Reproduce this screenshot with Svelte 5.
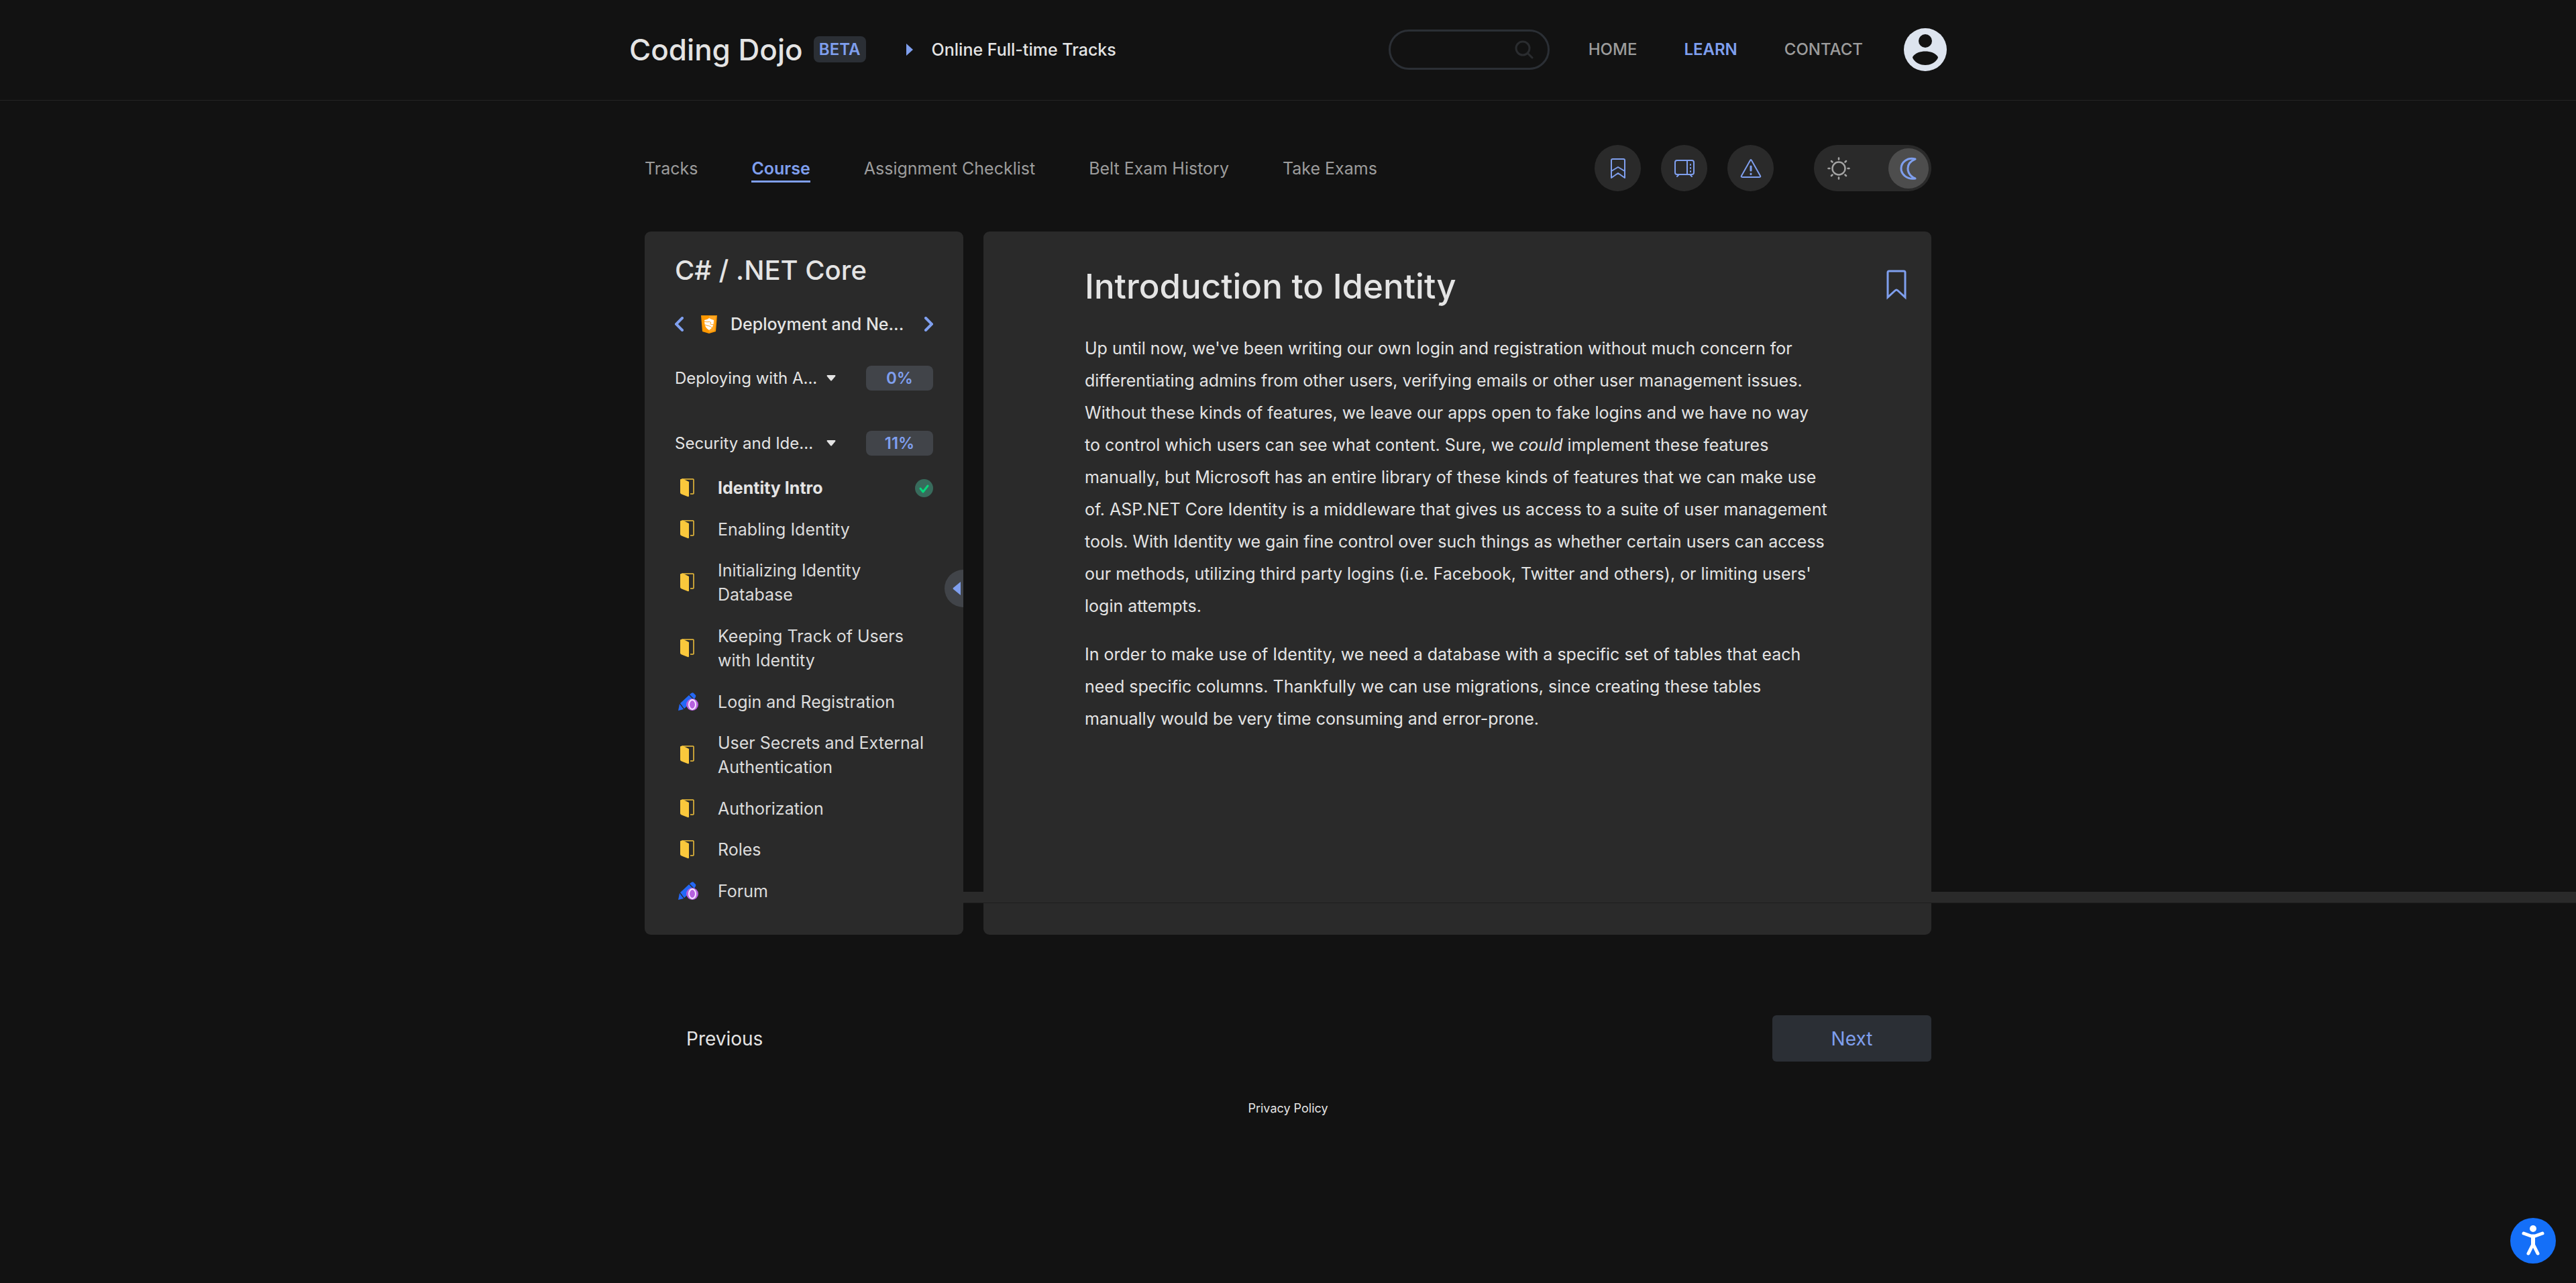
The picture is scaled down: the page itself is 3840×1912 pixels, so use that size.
<script>
  const tabs = ['Tracks', 'Course', 'Assignment Checklist', 'Belt Exam History', 'Take Exams'];
  const chapters = [
    { name: 'Deploying with A...', progress: '0%' },
    { name: 'Security and Ide...', progress: '11%' },
  ];
  const lessons = [
    { title: 'Identity Intro', kind: 'book', done: true },
    { title: 'Enabling Identity', kind: 'book' },
    { title: 'Initializing Identity Database', kind: 'book' },
    { title: 'Keeping Track of Users with Identity', kind: 'book' },
    { title: 'Login and Registration', kind: 'task' },
    { title: 'User Secrets and External Authentication', kind: 'book' },
    { title: 'Authorization', kind: 'book' },
    { title: 'Roles', kind: 'book' },
    { title: 'Forum', kind: 'task' },
  ];
  const firstParagraph = [
    "Up until now, we've been writing our own login and registration without much concern for",
    'differentiating admins from other users, verifying emails or other user management issues.',
    'Without these kinds of features, we leave our apps open to fake logins and we have no way',
    ['to control which users can see what content. Sure, we ', 'could', ' implement these features'],
    'manually, but Microsoft has an entire library of these kinds of features that we can make use',
    'of. ASP.NET Core Identity is a middleware that gives us access to a suite of user management',
    'tools. With Identity we gain fine control over such things as whether certain users can access',
    "our methods, utilizing third party logins (i.e. Facebook, Twitter and others), or limiting users'",
    'login attempts.',
  ];
  const secondParagraph = [
    'In order to make use of Identity, we need a database with a specific set of tables that each',
    'need specific columns. Thankfully we can use migrations, since creating these tables',
    'manually would be very time consuming and error-prone.',
  ];
</script>

<div class="page">
  <header>
    <div class="bar">
      <a class="brand" href="#home">Coding Dojo</a>
      <span class="beta">BETA</span>
      <svg class="crumb" viewBox="0 0 10 18"><path d="M0 0 10 9 0 18Z" fill="#7f9fee" /></svg>
      <a class="track" href="#track">Online Full-time Tracks</a>
      <div class="search">
        <input type="text" aria-label="Search" />
        <svg viewBox="0 0 28 28"><g fill="none" stroke="#2a2c2f" stroke-width="3" stroke-linecap="round"><circle cx="12" cy="12" r="10" /><path d="M19.500 19.500 26 26" /></g></svg>
      </div>
      <nav class="main-nav">
        <a href="#home">HOME</a>
        <a href="#learn" class="on">LEARN</a>
        <a href="#contact">CONTACT</a>
      </nav>
      <button class="avatar" aria-label="Account">
        <svg viewBox="0 0 64 64"><circle cx="32" cy="32" r="32" fill="#dde4ef" /><circle cx="32" cy="19" r="10" fill="#121212" /><path d="M13 43C17 36.500 25 34.500 32 34.500s15 2 19 8.500q0 1-1 3C46 52 39 55 32 55S18 52 14 46q-1-2-1-3Z" fill="#121212" /></svg>
      </button>
    </div>
  </header>

  <main>
    <div class="tools">
      <nav class="tabs">
        {#each tabs as tab}
          <a href="#{tab}" class:on={tab === 'Course'}>{tab}</a>
        {/each}
      </nav>
      <div class="actions">
        <button class="round" aria-label="Bookmarks">
          <svg viewBox="0 0 32 32"><g class="line"><path d="M6 4q0-2 2-2h16q2 0 2 2v26l-10-7-10 7Z" /><path d="M6 20l10-6 10 6" /></g></svg>
        </button>
        <button class="round" aria-label="Lectures">
          <svg viewBox="0 0 32 32"><g class="line"><rect x="2" y="4" width="28" height="21" rx="3" /><path d="M20 4v21M7 26l-2 2M25 26l2 2M25 10v1M25 15v1M25 20v1" /></g></svg>
        </button>
        <button class="round" aria-label="Report an issue">
          <svg viewBox="0 0 32 32"><g class="line"><path d="M15 4q1-2 2 0L30 27q1 2-2 2H4q-3 0-2-2Z" /><path d="M16 13v6M16 24v.500" stroke-width="3" /></g></svg>
        </button>
        <button class="theme" aria-label="Toggle dark mode">
          <svg class="sun" viewBox="0 0 34 34"><g fill="none" stroke="#a3a3a3" stroke-width="2.500" stroke-linecap="round"><circle cx="17" cy="17" r="9.500" /><path d="M17 1.500v2M17 30.500v2M1.500 17h2M30.500 17h2M6 6l1.500 1.500M26.500 26.500 28 28M6 28l1.500-1.500M26.500 7.500 28 6" /></g></svg>
          <span class="knob"><svg viewBox="0 0 32 36"><path d="M26 4C14 1 5 9 5 18s9 17 21 15C19 30 15 25 15 18S19 7 26 4Z" fill="none" stroke="#7f9fee" stroke-width="3" stroke-linejoin="round" /></svg></span>
        </button>
      </div>
    </div>

    <div class="columns">
      <aside>
        <h2>C# / .NET Core</h2>
        <div class="module">
          <button aria-label="Previous module"><svg class="chev" viewBox="0 0 14 22"><path d="M11 2 2 11l9 9" /></svg></button>
          <svg class="shield" viewBox="0 0 24 27"><path d="M0 0h24l-2 24-10 3-10-3Z" fill="#ff9800" /><path d="M12 1h10l-2 22-8 2Z" fill="#ffa726" /><path d="M12 4c3 2 5 2 7 3 0 8-2 12-7 15C7 19 5 15 5 7c3-1 5-1 7-3Z" fill="#fff" /><path d="M5 9c5 2 8-1 10 2-3 3 0 2 4 3M6 14c4 2 7 1 10 4" fill="none" stroke="#ff9f15" stroke-width="1" /></svg>
          <span>Deployment and Ne...</span>
          <button aria-label="Next module"><svg class="chev" viewBox="0 0 14 22"><path d="M3 2l9 9-9 9" /></svg></button>
        </div>
        {#each chapters as chapter}
          <div class="chapter">
            <button class="fold"><span>{chapter.name}</span><svg viewBox="0 0 14 9"><path d="M1 0h12q1 1 0 2L8 8q-1 1-2 0L1 2Q0 1 1 0Z" fill="#e4e4e4" /></svg></button>
            <span class="percent">{chapter.progress}</span>
          </div>
        {/each}
        <ul>
          {#each lessons as lesson}
            <li class:current={lesson.done}>
              {#if lesson.kind === 'book'}
                <svg class="icon" viewBox="0 0 30 28"><path d="M5 1h17q1 0 1 1v20q0 1-1 1h-4" fill="none" stroke="#f5c33b" stroke-width="1.500" /><path d="M3 2q0-1 1-1h4l8 4v21q0 2-2 1L4 23q-1-1-1-2Z" fill="#fac83c" /></svg>
              {:else}
                <svg class="icon" viewBox="0 0 30 28"><path d="M0 27 2 17l6 8ZM3 16 16 4l7 7-14 13ZM17 3q4-4 6-2l3 3q1 2-2 6Z" fill="#2468f6" /><circle cx="21" cy="18" r="9" fill="#b660de" /><ellipse cx="21" cy="18" rx="5" ry="7" fill="none" stroke="#f6e6ff" stroke-width="2" /></svg>
              {/if}
              <a href="#{lesson.title}">{lesson.title}</a>
              {#if lesson.done}
                <svg class="check" viewBox="0 0 27 27"><circle cx="13.500" cy="13.500" r="13.500" fill="#386b5c" /><path d="M8 14l4 5 7-9" fill="none" stroke="#09d67c" stroke-width="3" stroke-linecap="round" stroke-linejoin="round" /></svg>
              {/if}
            </li>
          {/each}
        </ul>
        <button class="collapse" aria-label="Collapse sidebar"><svg viewBox="0 0 12 20"><path d="M12 0v20L1 11q-1-1 0-2Z" fill="#7f9fee" /></svg></button>
      </aside>

      <article>
        <h1>Introduction to Identity</h1>
        <p>
          {#each firstParagraph as line}
            <span class="row">{#if Array.isArray(line)}{line[0]}<em>{line[1]}</em>{line[2]}{:else}{line}{/if}</span>
          {/each}
        </p>
        <p>
          {#each secondParagraph as line}<span class="row">{line}</span>{/each}
        </p>
        <button class="save" aria-label="Bookmark this lesson"><svg viewBox="0 0 30 45"><path d="M2 41V4q0-2 2-2h22q2 0 2 2v37L17 31q-2-2-4 0Z" fill="none" stroke="#7f9fee" stroke-width="3" /></svg></button>
      </article>
      <div class="strip"></div>
    </div>

    <div class="pager">
      <button class="prev">Previous</button>
      <button class="next">Next</button>
    </div>
  </main>
  <footer><a href="#privacy">Privacy Policy</a></footer>
  <button class="access" aria-label="Accessibility options">
    <svg viewBox="0 0 68 68"><circle cx="34" cy="34" r="34" fill="#146ff8" /><circle cx="34" cy="16" r="5" fill="#fff" /><path d="M20 23l11 4h6l11-4M34 28v11M34 39l-7 14M34 39l7 14" fill="none" stroke="#fff" stroke-width="5" stroke-linecap="round" stroke-linejoin="round" /><path d="M31 27h6v14h-6Z" fill="#fff" /></svg>
  </button>
</div>

<style>
  :global(body) { background: #121212; overflow-x: hidden; }
  .page {
    min-height: 100vh;
    overflow: hidden;
    font-family: Inter, "Liberation Sans", sans-serif;
    font-size: 25px;
    line-height: 36px;
    color: #e4e4e4;
  }
  * { box-sizing: border-box; }
  a { color: inherit; text-decoration: none; }
  button { font: inherit; color: inherit; background: none; border: 0; padding: 0; cursor: pointer; }
  svg { display: block; flex: none; }

  header { border-bottom: 1px solid #242424; }
  .bar {
    max-width: 1964px;
    height: 149px;
    margin: 0 auto;
    padding-bottom: 2px;
    display: flex;
    align-items: center;
  }
  .brand { font-size: 44px; line-height: 64px; font-weight: 500; }
  .beta {
    width: 78px;
    margin-left: 16px;
    border-radius: 8px;
    background: #2b2f35;
    color: #7f9fee;
    font-size: 24px;
    line-height: 39px;
    font-weight: 600;
    text-align: center;
  }
  .crumb { width: 10px; height: 18px; margin: 0 28px 0 60px; }
  .track { font-weight: 500; }
  .search { margin-left: auto; width: 240px; position: relative; display: flex; align-items: center; }
  .search input {
    width: 100%;
    height: 60px;
    padding: 0 60px 0 24px;
    border: 3px solid #2b2f35;
    border-radius: 30px;
    background: transparent;
    color: inherit;
    font: inherit;
  }
  .search svg { position: absolute; right: 24px; width: 28px; }
  .main-nav { display: flex; gap: 70px; margin: 0 61px 0 58px; color: #9c9c9c; font-size: 24px; font-weight: 500; }
  .main-nav .on { color: #7f9fee; font-weight: 600; }
  .avatar { width: 64px; height: 64px; }

  main { max-width: 1918px; margin: 0 auto; }
  .tools { display: flex; justify-content: space-between; align-items: center; padding: 66px 0 60px; }
  .tabs { display: flex; gap: 80px; padding-top: 4px; color: #9c9c9c; }
  .tabs a { border-bottom: 3px solid transparent; }
  .tabs .on { color: #7f9fee; font-weight: 600; border-color: #7f9fee; }
  .actions { display: flex; gap: 30px; }
  .round { width: 69px; height: 69px; border-radius: 50%; background: #2a2a2a; display: grid; place-items: center; }
  .round svg { width: 32px; }
  .line { fill: none; stroke: #7f9fee; stroke-width: 2; stroke-linecap: round; stroke-linejoin: round; }
  .theme {
    width: 175px;
    height: 69px;
    margin-left: 30px;
    padding: 0 4px 0 20px;
    border-radius: 35px;
    background: #2a2a2a;
    display: flex;
    align-items: center;
    justify-content: space-between;
  }
  .sun { width: 34px; }
  .knob { width: 60px; height: 60px; border-radius: 50%; background: #4d4d4d; display: grid; place-items: center; }
  .knob svg { width: 32px; }

  .columns { display: grid; grid-template-columns: 475px 1fr; gap: 30px; min-height: 1048px; position: relative; }
  aside, article { background: #2a2a2a; border-radius: 9px; }
  aside {
    position: relative;
    z-index: 2;
    overflow: hidden;
    padding: 28px 45px 47px;
    display: flex;
    flex-direction: column;
  }
  h1, h2, p, ul { margin: 0; padding: 0; }
  h2 { font-size: 40px; line-height: 60px; font-weight: 500; }
  .module { display: flex; align-items: center; margin-top: 32px; font-weight: 500; }
  .module span { flex: 1; white-space: nowrap; }
  .chev { width: 14px; fill: none; stroke: #7f9fee; stroke-width: 4; stroke-linecap: round; }
  .shield { width: 24px; margin: 0 20px 0 25px; }
  .chapter { display: flex; align-items: center; justify-content: space-between; height: 37px; margin-top: 44px; font-size: 24px; }
  .chapter + .chapter { margin-top: 60px; }
  .fold { display: flex; align-items: center; }
  .fold span { width: 226px; text-align: left; white-space: nowrap; }
  .fold svg { width: 14px; }
  .percent {
    width: 100px;
    line-height: 37px;
    border-radius: 8px;
    background: #414449;
    color: #7f9fee;
    font-weight: 600;
    text-align: center;
  }
  ul { flex: 1; margin-top: 30px; list-style: none; display: flex; flex-direction: column; justify-content: space-between; }
  li { display: flex; align-items: center; color: #dcdcdc; }
  li a { flex: 1; }
  li.current { font-weight: 700; color: #e4e4e4; }
  .icon { width: 30px; margin: 0 29px 0 5px; }
  .check { width: 27px; }
  .collapse {
    position: absolute;
    right: -28px;
    top: 504px;
    width: 56px;
    height: 56px;
    padding-left: 12px;
    border-radius: 50%;
    background: #414449;
  }
  .collapse svg { width: 12px; }

  article { position: relative; padding: 46px 151px 48px; }
  h1 { font-size: 51px; line-height: 72px; font-weight: 500; }
  p { line-height: 48px; margin-bottom: 24px; color: #e4e4e4; }
  h1 + p { margin-top: 32px; }
  .row { display: block; white-space: nowrap; }
  .save { position: absolute; right: 37px; top: 57px; }
  .save svg { width: 30px; }
  .strip {
    position: absolute;
    left: 0;
    bottom: 47px;
    width: 100vw;
    height: 17px;
    background: #2a2a2a;
    border-bottom: 1px solid #1e1e1e;
  }

  .pager { display: flex; justify-content: space-between; margin-top: 120px; font-size: 28px; }
  .prev { padding: 0 62px; }
  .next { width: 237px; height: 69px; border-radius: 6px; background: #2b2f35; color: #7f9fee; }
  footer { margin-top: 52px; text-align: center; font-size: 18px; }
  .access { position: fixed; right: 30px; bottom: 29px; width: 68px; height: 68px; }
</style>
